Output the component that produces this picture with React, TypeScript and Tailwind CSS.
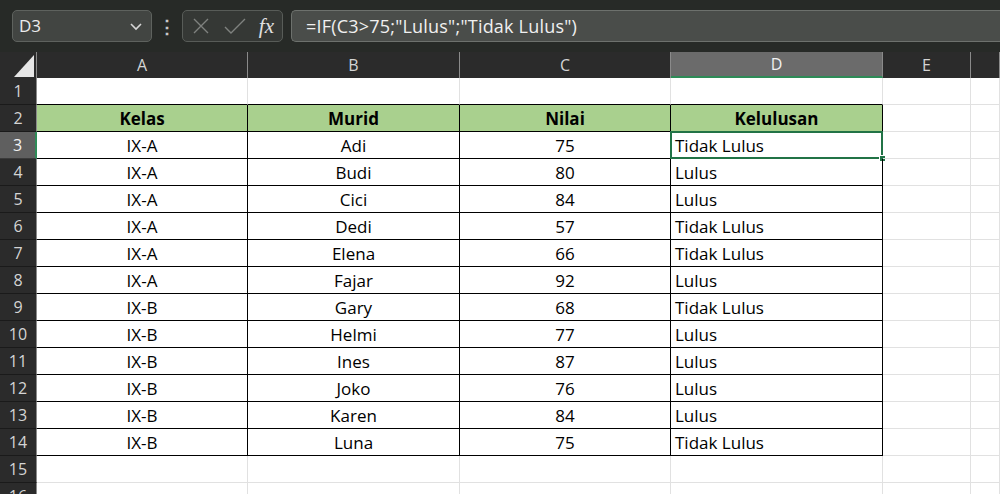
import React from "react";

const data = [
  { kelas: "IX-A", murid: "Adi", nilai: 75 },
  { kelas: "IX-A", murid: "Budi", nilai: 80 },
  { kelas: "IX-A", murid: "Cici", nilai: 84 },
  { kelas: "IX-A", murid: "Dedi", nilai: 57 },
  { kelas: "IX-A", murid: "Elena", nilai: 66 },
  { kelas: "IX-A", murid: "Fajar", nilai: 92 },
  { kelas: "IX-B", murid: "Gary", nilai: 68 },
  { kelas: "IX-B", murid: "Helmi", nilai: 77 },
  { kelas: "IX-B", murid: "Ines", nilai: 87 },
  { kelas: "IX-B", murid: "Joko", nilai: 76 },
  { kelas: "IX-B", murid: "Karen", nilai: 84 },
  { kelas: "IX-B", murid: "Luna", nilai: 75 },
];

const cols = ["A", "B", "C", "D", "E", ""];

function TopBar() {
  return (
    <div className="h-[52px] bg-[#272a27] flex items-start pt-[10px] pl-[12px] gap-[8px]">
      <div className="w-[140px] h-[32px] rounded-[5px] bg-[#424542] border border-[#5e625e] flex items-center justify-between pl-[6px] pr-[8px] text-[#ececec] text-[17px]">
        <span>D3</span>
        <svg width="14" height="14" viewBox="0 0 14 14" fill="none" stroke="#d6d6d6" strokeWidth="1.6">
          <path d="M2 5l5 5 5-5" />
        </svg>
      </div>
      <div className="h-[32px] flex items-center text-[#c8c8c8] text-[18px] font-bold w-[14px] justify-center leading-none">⋮</div>
      <div className="w-[101px] h-[32px] rounded-[5px] bg-[#353835] border border-[#585c58] flex items-center justify-between px-[8px]">
        <svg width="20" height="20" viewBox="0 0 20 20" fill="none" stroke="#7f827f" strokeWidth="1.4">
          <path d="M3 3l14 14M17 3L3 17" />
        </svg>
        <svg width="24" height="20" viewBox="0 0 24 20" fill="none" stroke="#7f827f" strokeWidth="1.4">
          <path d="M2 11l6 6L22 3" />
        </svg>
        <span className="text-[#e0e0e0] text-[21px] italic leading-none" style={{ fontFamily: '"Liberation Serif", serif' }}>
          fx
        </span>
      </div>
      <div className="flex-1 h-[32px] rounded-l-[5px] bg-[#4a4d4a] border border-[#6d716d] border-r-0 flex items-center pl-[14px] text-[#f0f0f0] text-[18px] tracking-[0.2px]">
        =IF(C3&gt;75;"Lulus";"Tidak Lulus")
      </div>
    </div>
  );
}

export default function App() {
  const rows = Array.from({ length: 16 }, (_, i) => i + 1);

  const cellText = (r: number, c: number) => {
    if (r === 2) return ["Kelas", "Murid", "Nilai", "Kelulusan"][c] ?? "";
    if (r >= 3 && r <= 14) {
      const d = data[r - 3];
      if (c === 0) return d.kelas;
      if (c === 1) return d.murid;
      if (c === 2) return String(d.nilai);
      if (c === 3) return d.nilai > 75 ? "Lulus" : "Tidak Lulus";
    }
    return "";
  };

  return (
    <div className="w-[1000px] h-[494px] overflow-hidden bg-white" style={{ fontFamily: '"Open Sans", "Noto Sans", sans-serif' }}>
      <TopBar />
      <div className="grid grid-cols-[37px_211px_212px_211px_212px_88px_1fr]">
        {/* header row */}
        <div className="h-[26px] bg-[#2b2b2b] border-r border-[#8a8a8a] flex items-end justify-end pr-[2px] pb-[1px]">
          <svg width="20" height="22" viewBox="0 0 20 22">
            <polygon points="20,0 20,22 0,22" fill="#e6e6e6" />
          </svg>
        </div>
        {cols.map((c, i) => (
          <div
            key={c + i}
            className={
              c === "D"
                ? "h-[26px] bg-[#6b6b6b] border-r border-[#8a8a8a] border-b-2 border-b-[#2e8b57] flex items-center justify-center text-[#f2f2f2] text-[16px]"
                : "h-[26px] bg-[#2b2b2b] border-r border-[#8a8a8a] flex items-center justify-center text-[#d4d4d4] text-[16px]"
            }
          >
            {c}
          </div>
        ))}

        {rows.map((r) => (
          <React.Fragment key={r}>
            <div
              className={
                r === 3
                  ? "h-[27px] bg-[#5f5f5f] border-r-2 border-[#2e8b57] border-b border-b-[#3a3a3a] flex items-center justify-center text-[#f2f2f2] text-[16px]"
                  : "h-[27px] bg-[#2b2b2b] border-r border-[#8a8a8a] border-b border-b-[#1a1a1a] flex items-center justify-center text-[#d4d4d4] text-[16px]"
              }
            >
              {r}
            </div>
            {cols.map((_, c) => {
              const inTable = c <= 3 && r >= 2 && r <= 14;
              const aboveTable = c <= 3 && r === 1;
              const header = r === 2 && c <= 3;
              let cls = "h-[27px] relative flex items-center text-[17px] text-black border-r border-b ";
              if (inTable) cls += "border-black ";
              else if (aboveTable) cls += "border-r-[#e1e1e1] border-b-black ";
              else cls += "border-[#e1e1e1] ";
              if (header) cls += "bg-[#a9d08e] font-bold justify-center ";
              else if (c === 3) cls += "justify-start pl-[4px] ";
              else cls += "justify-center ";
              return (
                <div key={c} className={cls}>
                  <span className="pt-[2px]">{cellText(r, c)}</span>
                  {r === 3 && c === 3 && (
                    <>
                      <div className="absolute -left-px -top-px -right-px -bottom-px border-2 border-[#217346]" />
                      <div className="absolute -right-[4px] -bottom-[4px] w-[7px] h-[7px] bg-[#217346] border border-white" />
                    </>
                  )}
                </div>
              );
            })}
          </React.Fragment>
        ))}
      </div>
    </div>
  );
}
